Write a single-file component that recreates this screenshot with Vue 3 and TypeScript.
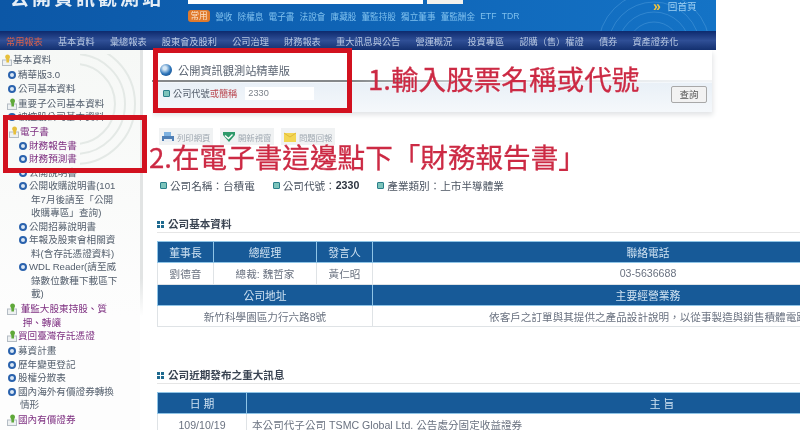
<script setup lang="ts">
interface SideItem {
  lines: string[]
  kind: 'bullet' | 'gold' | 'green'
  indent: number
  link?: boolean
  gap?: boolean
}

const quick = ['營收', '除權息', '電子書', '法說會', '庫藏股', '董監持股', '獨立董事', '董監酬金', 'ETF', 'TDR']
const menu = ['基本資料', '彙總報表', '股東會及股利', '公司治理', '財務報表', '重大訊息與公告', '營運概況', '投資專區', '認購（售）權證', '債券', '資產證券化']

const sideItems: SideItem[] = [
  { lines: ['基本資料'], kind: 'gold', indent: 2 },
  { lines: ['精華版3.0'], kind: 'bullet', indent: 8, gap: true },
  { lines: ['公司基本資料'], kind: 'bullet', indent: 8 },
  { lines: ['重要子公司基本資料'], kind: 'green', indent: 7, gap: true },
  { lines: ['被控股公司基本資料'], kind: 'bullet', indent: 8 },
  { lines: ['電子書'], kind: 'gold', indent: 9, link: true, gap: true },
  { lines: ['財務報告書'], kind: 'bullet', indent: 19, link: true },
  { lines: ['財務預測書'], kind: 'bullet', indent: 19, link: true },
  { lines: ['公開說明書'], kind: 'bullet', indent: 19 },
  { lines: ['公開收購說明書(101', '年7月後請至「公開', '收購專區」查詢)'], kind: 'bullet', indent: 19 },
  { lines: ['公開招募說明書'], kind: 'bullet', indent: 19 },
  { lines: ['年報及股東會相關資', '料(含存託憑證資料)'], kind: 'bullet', indent: 19 },
  { lines: ['WDL Reader(請至威', '錄數位數種下載區下', '載)'], kind: 'bullet', indent: 19 },
  { lines: ['\u00a0董監大股東持股、質', '\u00a0押、轉讓'], kind: 'green', indent: 7, link: true, gap: true },
  { lines: ['買回臺灣存託憑證'], kind: 'green', indent: 7, link: true },
  { lines: ['募資計畫'], kind: 'bullet', indent: 8, gap: true },
  { lines: ['歷年變更登記'], kind: 'bullet', indent: 8 },
  { lines: ['股權分散表'], kind: 'bullet', indent: 8 },
  { lines: ['國內海外有價證券轉換', '情形'], kind: 'bullet', indent: 8 },
  { lines: ['國內有價證券'], kind: 'green', indent: 7, link: true, gap: true }
]
</script>

<template>
  <div class="page">
    <header class="top">
      <div class="logo">公開資訊觀測站</div>
      <div class="top-mid">
        <div class="search">
          <span class="search-box"></span>
          <span class="search-btn"></span>
        </div>
        <div class="quick">
          <span class="badge">常用</span>
          <span v-for="q in quick" :key="q">{{ q }}</span>
        </div>
      </div>
      <div class="home"><span class="chev">»</span>回首頁</div>
      <svg class="arcs" width="140" height="31" viewBox="0 0 140 31" fill="none" stroke="#6fb4ea" stroke-opacity=".32">
        <circle cx="78" cy="48" r="26" />
        <circle cx="78" cy="48" r="36" />
        <circle cx="78" cy="48" r="46" />
        <circle cx="78" cy="48" r="56" />
      </svg>
    </header>
    <nav class="menu">
      <span class="menu-first">常用報表</span>
      <span v-for="m in menu" :key="m">{{ m }}</span>
    </nav>

    <div class="body">
      <aside class="side">
        <svg class="swirl" width="60" height="130" viewBox="0 0 60 130" fill="none" stroke="#e4e9e6" stroke-width="2">
          <circle cx="-5" cy="50" r="40" />
          <circle cx="-5" cy="50" r="50" />
          <circle cx="-5" cy="50" r="60" />
        </svg>
        <div
          v-for="item in sideItems"
          :key="item.lines[0]"
          class="side-row"
          :class="{ link: item.link, gap: item.gap }"
          :style="{ paddingLeft: item.indent + 'px' }"
        >
          <span v-if="item.kind === 'bullet'" class="dot"></span>
          <svg v-else class="folder" width="10" height="12" viewBox="0 0 10 12">
            <rect x="0.5" y="6" width="9" height="5.5" fill="#eef1f2" stroke="#b4bcc4" />
            <path d="M5.5 0.5 C7.2 0.5 8 1.7 8 2.9 C8 4.1 7 4.7 7 5.9 V8.6 H4.4 V5.9 C4.4 4.7 3.2 4.1 3.2 2.9 C3.2 1.7 4 0.5 5.5 0.5 Z" :fill="item.kind === 'gold' ? '#e6bf3c' : '#5fa83a'" />
          </svg>
          <div class="side-text">
            <div v-for="line in item.lines" :key="line">{{ line }}</div>
          </div>
        </div>
      </aside>

      <main class="main">
        <section class="band">
          <div class="band-title">
            <span class="globe"></span>
            <span>公開資訊觀測站精華版</span>
          </div>
          <div class="band-query">
            <span class="sq"></span>
            <span class="q-label">公司代號<em>或簡稱</em></span>
            <span class="q-input">2330</span>
            <span class="q-btn">查詢</span>
          </div>
        </section>

        <div class="tools">
          <span class="tool">
            <svg width="14" height="12" viewBox="0 0 14 12"><path d="M3 1h7v4H3z" fill="#7fb2e0" /><path d="M1 5h12v5H1z" fill="#4f7fb5" /><path d="M3 8h8v3H3z" fill="#e8eef4" /></svg>
            列印網頁
          </span>
          <span class="tool">
            <svg width="14" height="12" viewBox="0 0 14 12"><path d="M1 1h12v3L7 11 1 4z" fill="#2f9a6b" /><path d="M3 4.5l3.5 3 4-4" fill="none" stroke="#fff" stroke-width="1.4" /></svg>
            開新視窗
          </span>
          <span class="tool">
            <svg width="14" height="12" viewBox="0 0 14 12"><path d="M1 2h12v9H1z" fill="#f3d653" /><path d="M1 2l6 4 6-4" fill="none" stroke="#e0b93a" /></svg>
            問題回報
          </span>
        </div>

        <div class="company">
          <span class="co"><i class="sq"></i>公司名稱：台積電</span>
          <span class="co"><i class="sq"></i>公司代號：<b>2330</b></span>
          <span class="co"><i class="sq"></i>產業類別：上市半導體業</span>
        </div>

        <h3 class="head"><i class="dots"></i>公司基本資料</h3>
        <table class="grid basic">
          <colgroup>
            <col class="c1" /><col class="c2" /><col class="c3" /><col />
          </colgroup>
          <tbody>
            <tr><th>董事長</th><th>總經理</th><th>發言人</th><th>聯絡電話</th></tr>
            <tr><td>劉德音</td><td>總裁: 魏哲家</td><td>黃仁昭</td><td>03-5636688</td></tr>
            <tr><th colspan="3">公司地址</th><th>主要經營業務</th></tr>
            <tr>
              <td colspan="3">新竹科學園區力行六路8號</td>
              <td>依客戶之訂單與其提供之產品設計說明，以從事製造與銷售積體電路</td>
            </tr>
          </tbody>
        </table>

        <h3 class="head second"><i class="dots"></i>公司近期發布之重大訊息</h3>
        <table class="grid news">
          <colgroup>
            <col class="d1" /><col />
          </colgroup>
          <tbody>
            <tr><th>日 期</th><th>主 旨</th></tr>
            <tr><td>109/10/19</td><td class="left">本公司代子公司 TSMC Global Ltd. 公告處分固定收益證券</td></tr>
          </tbody>
        </table>
      </main>
    </div>

    <!-- 紅色標註 -->
    <div class="mark mark-a"></div>
    <div class="mark mark-b"></div>
    <div class="note note-a">1.輸入股票名稱或代號</div>
    <div class="note note-b">2.在電子書這邊點下「財務報告書」</div>
  </div>
</template>

<style>
html,
body {
  margin: 0;
  background: #fff;
  overflow: hidden;
}
</style>

<style scoped>
.page {
  position: relative;
  width: 800px;
  height: 430px;
  overflow: hidden;
  background: #fff;
  font-family: "Liberation Sans", "Noto Sans CJK TC", sans-serif;
  filter: blur(0.45px);
}

/* 頂部 */
.top {
  position: relative;
  width: 716px;
  height: 31px;
  display: flex;
  background: linear-gradient(90deg, #0c57a6 0%, #0f64b6 50%, #1473c6 100%);
  overflow: hidden;
}
.logo {
  width: 188px;
  padding-left: 10px;
  box-sizing: border-box;
  height: 8px;
  line-height: 8px;
  font-size: 19px;
  font-weight: 700;
  letter-spacing: 3px;
  color: #e6eef6;
  white-space: nowrap;
  margin-top: -5px;
  flex: none;
}
.top-mid {
  flex: none;
  width: 465px;
}
.search {
  display: flex;
  gap: 4px;
  height: 4px;
}
.search-box {
  width: 235px;
  background: #fff;
}
.search-btn {
  width: 36px;
  background: #f3f1ec;
}
.quick {
  margin-top: 6px;
  display: flex;
  align-items: center;
  gap: 5.2px;
  height: 12px;
  font-size: 8.6px;
  color: #7fc0ee;
  white-space: nowrap;
}
.badge {
  width: 22px;
  height: 12px;
  line-height: 12px;
  text-align: center;
  border-radius: 3px;
  background: #e07a2c;
  color: #fbe3cb;
}
.home {
  flex: none;
  display: flex;
  align-items: center;
  height: 12px;
  font-size: 9.6px;
  color: #9fd0f2;
  white-space: nowrap;
}
.chev {
  margin-right: 7px;
  color: #f2c53d;
  font-size: 14px;
  line-height: 12px;
  font-weight: 700;
}
.arcs {
  position: absolute;
  right: 0;
  top: 0;
}

/* 導覽列 */
.menu {
  width: 716px;
  height: 19px;
  padding-left: 6px;
  box-sizing: border-box;
  display: flex;
  align-items: center;
  gap: 15.2px;
  font-size: 9.2px;
  color: #b8c8e2;
  white-space: nowrap;
  background: linear-gradient(180deg, #0d2a6e 0%, #2f4f96 50%, #13306f 100%);
}
.menu-first {
  color: #d8604c;
}

.body {
  display: flex;
}

/* 左側選單 */
.side {
  position: relative;
  flex: none;
  width: 143px;
  height: 380px;
  padding-top: 3px;
  box-sizing: border-box;
  background: linear-gradient(180deg, #f6f8f6, #fdfdfd 70%);
  border-right: 3px solid;
  border-image: linear-gradient(180deg, #e2e4e4 60%, #fff 70%) 1;
  overflow: hidden;
}
.swirl {
  position: absolute;
  top: 4px;
  right: 0;
}
.side-row {
  position: relative;
  display: flex;
  align-items: flex-start;
  font-size: 9.6px;
  line-height: 13.5px;
  color: #55606e;
  white-space: nowrap;
}
.side-row.gap {
  margin-top: 1.5px;
}
.side-row.link {
  color: #7d2f80;
}
.side-text div + div {
  padding-left: 2px;
}
.dot {
  flex: none;
  width: 4px;
  height: 4px;
  margin: 3px 2px 0 0;
  border: 2px solid #2a62ad;
  border-radius: 50%;
  background: #dbe8f5;
}
.folder {
  flex: none;
  margin: 1px 1px 0 0;
}
.side-text {
  min-width: 0;
}

/* 主內容 */
.main {
  flex: 1;
  min-width: 0;
  margin-left: 9px;
  height: 380px;
  overflow: hidden;
}
.band {
  width: 560px;
  height: 62px;
  background: linear-gradient(180deg, #fff 0 32px, #e9f0f7 33px, #f5f8fb 100%);
  box-shadow: 1px 3px 5px #e2e4e6;
}
.band-title {
  height: 32px;
  padding: 0 0 1px 8px;
  box-sizing: border-box;
  display: flex;
  align-items: flex-end;
  gap: 6px;
  font-size: 11.2px;
  line-height: 15px;
  color: #5a6472;
  border-bottom: 2px solid;
  border-image: linear-gradient(90deg, #85888a 0 200px, #d8dde0 340px, #f2f4f6 100%) 1;
}
.globe {
  width: 12px;
  height: 12px;
  margin-bottom: 3px;
  border-radius: 50%;
  background: radial-gradient(circle at 40% 35%, #d6e8f6 0 15%, #2b73b8 55%, #123f78 100%);
}
.band-query {
  height: 22px;
  padding-left: 11px;
  display: flex;
  align-items: center;
  font-size: 9.2px;
  color: #4c5664;
  position: relative;
}
.q-label em {
  font-style: normal;
  color: #b8434c;
}
.q-input {
  width: 66px;
  height: 13px;
  line-height: 13px;
  margin-left: 8px;
  padding-left: 3px;
  background: #fff;
  font-size: 9.2px;
  color: #7c828a;
}
.q-btn {
  position: absolute;
  left: 519px;
  top: 4px;
  width: 36px;
  height: 17px;
  line-height: 15px;
  box-sizing: border-box;
  text-align: center;
  background: #f2f2f2;
  border: 1px solid #a8a8a8;
  border-radius: 2px;
  font-size: 9.6px;
  color: #555;
}
.sq {
  display: inline-block;
  width: 5px;
  height: 5px;
  margin-right: 3px;
  background: #7cc4bb;
  border: 1px solid #2a7f8a;
  border-radius: 1px;
  flex: none;
}

.tools {
  margin: 16px 0 0 7px;
  height: 17px;
  display: flex;
  gap: 7px;
}
.tool {
  width: 54px;
  box-sizing: border-box;
  padding-left: 2px;
  display: flex;
  align-items: center;
  gap: 2px;
  background: #f0f2f3;
  font-size: 8.4px;
  color: #a0a9b2;
  white-space: nowrap;
}

.company {
  margin: 33px 0 0 8px;
  height: 14px;
  display: flex;
  gap: 18px;
  align-items: center;
  font-size: 10.6px;
  color: #4a5360;
  white-space: nowrap;
}
.co {
  display: flex;
  align-items: center;
}
.company b {
  color: #2d3440;
}

.head {
  margin: 21px 0 0 5px;
  height: 20px;
  line-height: 22px;
  box-sizing: border-box;
  border-bottom: 1px solid #e6e6e6;
  font-size: 10.6px;
  font-weight: 700;
  color: #3a4452;
  white-space: nowrap;
}
.head.second {
  margin-top: 37px;
}
.dots {
  display: inline-block;
  width: 7px;
  height: 7px;
  margin-right: 4px;
  background:
    linear-gradient(#1f6a8f, #1f6a8f) 0 0 / 3px 3px no-repeat,
    linear-gradient(#1f6a8f, #1f6a8f) 100% 0 / 3px 3px no-repeat,
    linear-gradient(#1f6a8f, #1f6a8f) 0 100% / 3px 3px no-repeat,
    linear-gradient(#1f6a8f, #1f6a8f) 100% 100% / 3px 3px no-repeat;
}

.grid {
  margin: 8px 0 0 5px;
  border-collapse: collapse;
  table-layout: fixed;
  font-size: 10.6px;
  color: #6a7280;
}
.basic {
  width: 767px;
}
.news {
  width: 921px;
}
.c1 {
  width: 56px;
}
.c2 {
  width: 103px;
}
.c3 {
  width: 56px;
}
.d1 {
  width: 89px;
}
.grid th,
.grid td {
  height: 20.3px;
  padding: 0;
  text-align: center;
  white-space: nowrap;
  overflow: hidden;
  border: 1px solid #dfe3e6;
}
.grid th {
  background: #175a98;
  border-color: #8fc4e6;
  font-weight: 400;
  font-size: 10.8px;
  color: #cfe2f2;
}
.grid td.left {
  text-align: left;
  padding-left: 5px;
}

/* 標註 */
.mark {
  position: absolute;
  box-sizing: border-box;
  border: 5px solid #d2111f;
}
.mark-a {
  left: 153px;
  top: 48px;
  width: 199px;
  height: 65px;
}
.mark-b {
  left: 3px;
  top: 115px;
  width: 144px;
  height: 58px;
}
.note {
  position: absolute;
  font-family: "Noto Sans CJK TC", sans-serif;
  font-weight: 400;
  -webkit-text-stroke: 0.3px #cc2a44;
  color: #cc2a44;
  white-space: nowrap;
  line-height: 1;
}
.note-a {
  left: 368px;
  top: 65px;
  font-size: 27.6px;
}
.note-b {
  left: 149px;
  top: 143px;
  font-size: 27.6px;
}
</style>
